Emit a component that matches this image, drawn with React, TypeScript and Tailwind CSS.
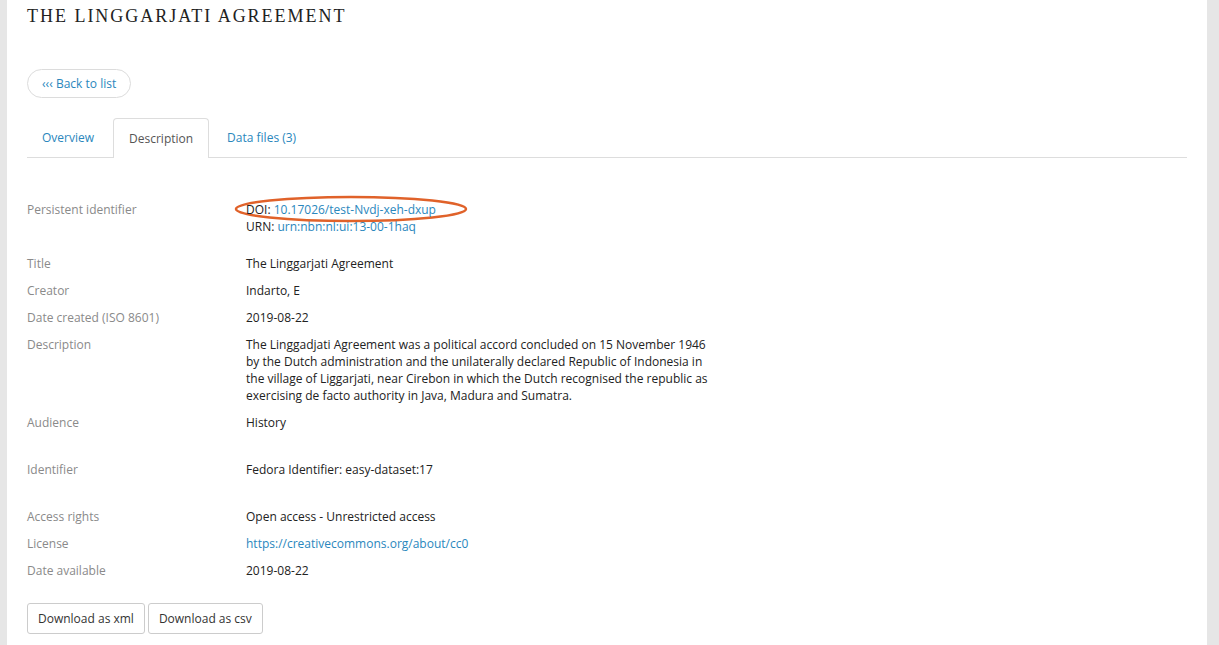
function Row({ label, children, className = "" }: { label: string; children: React.ReactNode; className?: string }) {
  return (
    <div className={`flex ${className}`}>
      <div className="w-[219px] shrink-0 text-[#8a8a8a]">{label}</div>
      <div className="text-[#222]">{children}</div>
    </div>
  );
}

export default function App() {
  return (
    <div
      className="flex min-h-[645px] bg-[#e6e6e6] text-[12px] leading-[17px]"
      style={{ fontFamily: '"Open Sans", "Liberation Sans", sans-serif' }}
    >
      <div className="ml-[7px] w-[1200px] bg-white px-5 pb-10">
        <h1
          className="pt-[5px] text-[18px] leading-[22px] tracking-[0.11em] text-[#222]"
          style={{ fontFamily: '"Liberation Serif", "DejaVu Serif", serif' }}
        >
          THE LINGGARJATI AGREEMENT
        </h1>

        <button
          type="button"
          className="mt-[42px] h-[29px] rounded-full border border-[#dcdcdc] px-[14px] text-[12px] text-[#2a87bd]"
        >
          ‹‹‹ Back to list
        </button>

        {/* Tabs */}
        <div className="mt-5 flex border-b border-[#dddddd]">
          <div className="px-[15px] py-[11px] text-[#2a87bd]">Overview</div>
          <div className="-mb-px ml-[4px] rounded-t border border-b-0 border-[#dddddd] bg-white px-[15px] py-[11px] text-[#555]">
            Description
          </div>
          <div className="px-[18px] py-[11px] text-[#2a87bd]">Data files (3)</div>
        </div>

        <div className="mt-[43px] flex flex-col gap-[10px]">
          <Row label="Persistent identifier">
            <div className="relative">
              <svg
                className="absolute -left-[12px] -top-[6px]"
                width="234"
                height="30"
                viewBox="0 0 234 30"
              >
                <ellipse cx="117" cy="14" rx="115" ry="12" fill="none" stroke="#e0622a" strokeWidth="2.5" />
              </svg>
              <div className="relative">
                DOI: <span className="text-[#2a87bd]">10.17026/test-Nvdj-xeh-dxup</span>
              </div>
              <div>
                URN: <span className="text-[#2a87bd]">urn:nbn:nl:ui:13-00-1haq</span>
              </div>
            </div>
          </Row>
          <Row label="Title" className="mt-[10px]">The Linggarjati Agreement</Row>
          <Row label="Creator">Indarto, E</Row>
          <Row label="Date created (ISO 8601)">2019-08-22</Row>
          <Row label="Description">
            <p className="w-[470px]">
              The Linggadjati Agreement was a political accord concluded on 15 November 1946 by the Dutch
              administration and the unilaterally declared Republic of Indonesia in the village of Liggarjati,
              near Cirebon in which the Dutch recognised the republic as exercising de facto authority in Java,
              Madura and Sumatra.
            </p>
          </Row>
          <Row label="Audience">History</Row>
          <Row label="Identifier" className="mt-[20px]">Fedora Identifier: easy-dataset:17</Row>
          <Row label="Access rights" className="mt-[20px]">Open access - Unrestricted access</Row>
          <Row label="License">
            <span className="text-[#2a87bd]">https://creativecommons.org/about/cc0</span>
          </Row>
          <Row label="Date available">2019-08-22</Row>
        </div>

        <div className="mt-[24px] flex gap-[3px]">
          <button type="button" className="h-[31px] rounded-[3px] border border-[#cccccc] px-[10px] text-[#333]">
            Download as xml
          </button>
          <button type="button" className="h-[31px] rounded-[3px] border border-[#cccccc] px-[10px] text-[#333]">
            Download as csv
          </button>
        </div>
      </div>
    </div>
  );
}
